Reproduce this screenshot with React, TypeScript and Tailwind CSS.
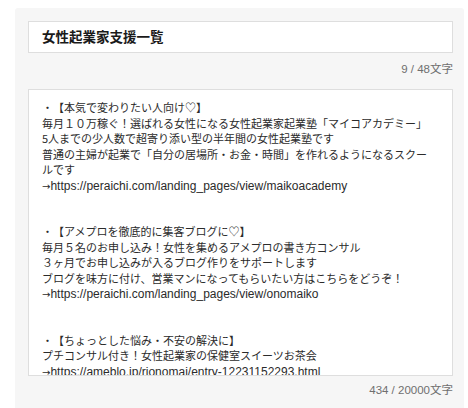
import React from "react";

const body = [
  "・【本気で変わりたい人向け♡】",
  "毎月１０万稼ぐ！選ばれる女性になる女性起業家起業塾「マイコアカデミー」",
  "5人までの少人数で超寄り添い型の半年間の女性起業塾です",
  "普通の主婦が起業で「自分の居場所・お金・時間」を作れるようになるスクー",
  "ルです",
  "→https://peraichi.com/landing_pages/view/maikoacademy",
  "",
  "",
  "・【アメプロを徹底的に集客ブログに♡】",
  "毎月５名のお申し込み！女性を集めるアメプロの書き方コンサル",
  "３ヶ月でお申し込みが入るブログ作りをサポートします",
  "ブログを味方に付け、営業マンになってもらいたい方はこちらをどうぞ！",
  "→https://peraichi.com/landing_pages/view/onomaiko",
  "",
  "",
  "・【ちょっとした悩み・不安の解決に】",
  "プチコンサル付き！女性起業家の保健室スイーツお茶会",
  "→https://ameblo.jp/rionomai/entry-12231152293.html",
  "",
  "",
];

function Line({ text }: { text: string }) {
  // URL lines: arrow + latin link text
  if (text.startsWith("→")) {
    return (
      <>
        <span className="font-['DejaVu_Sans',sans-serif] text-[10px]">→</span>
        <span className="font-['Liberation_Sans',sans-serif] text-[12px]">{text.slice(1)}</span>
      </>
    );
  }
  return <>{text}</>;
}

export default function App() {
  return (
    <div className="w-[468px] h-[408px] overflow-hidden bg-white pt-[8px] font-['Noto_Sans_CJK_JP',sans-serif] [text-spacing-trim:space-all]">
      <div className="ml-[15px] w-[449px] h-[420px] bg-[#f6f6f6] rounded-[3px] pt-[13px] pl-[13px] pr-[11px]">
        {/* Title field */}
        <div className="h-[32px] bg-white border border-[#dedede] flex items-center pl-[13px]">
          <span className="text-[13.5px] font-bold text-[#1a1a1a] leading-none">女性起業家支援一覧</span>
        </div>
        <div className="mt-[8px] h-[16px] leading-[16px] text-right text-[11.5px] text-[#6f6f6f] font-['Liberation_Sans','Noto_Sans_CJK_JP',sans-serif]">
          9 / 48文字
        </div>

        {/* Body field */}
        <div className="mt-[12px] h-[287px] bg-white border border-[#dedede] overflow-hidden pt-[10px] pl-[13px]">
          {body.map((line, i) => (
            <div key={i} className="h-[15.5px] leading-[15.5px] text-[11px] text-[#2b2b2b] whitespace-pre">
              <Line text={line} />
            </div>
          ))}
        </div>
        <div className="mt-[6px] h-[16px] leading-[16px] text-right text-[11.5px] text-[#6f6f6f] font-['Liberation_Sans','Noto_Sans_CJK_JP',sans-serif]">
          434 / 20000文字
        </div>
      </div>
    </div>
  );
}
